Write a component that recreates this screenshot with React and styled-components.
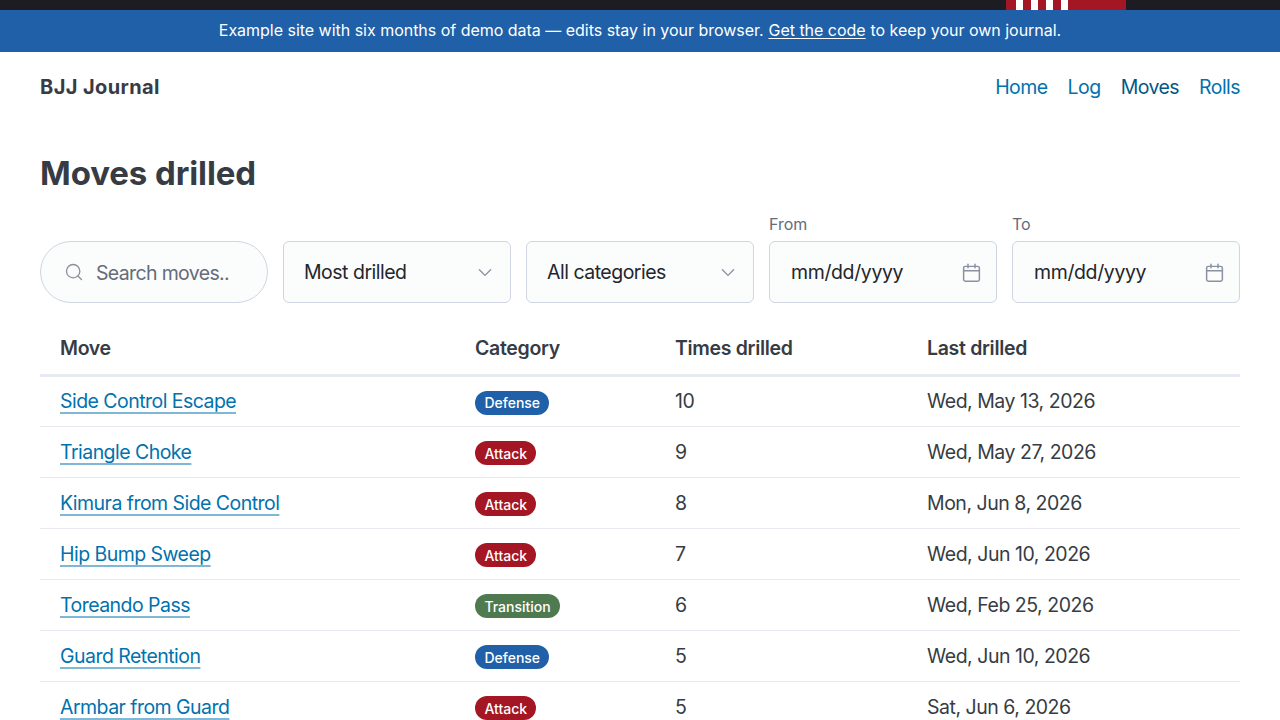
import React from "react";
import styled, { createGlobalStyle } from "styled-components";

const Global = createGlobalStyle`
  html, body { margin: 0; padding: 0; background: #fff; }
  body {
    font-family: Inter, "Noto Sans", sans-serif;
    font-size: 19.5px;
    letter-spacing: -0.48px;
    color: #373c44;
    -webkit-font-smoothing: antialiased;
  }
  * { box-sizing: border-box; }
`;

const Page = styled.div`
  width: 1280px;
  height: 720px;
  overflow: hidden;
`;

const TopStrip = styled.div`
  height: 10px;
  background: #1c1c22;
  display: flex;
  justify-content: flex-end;
  padding-right: 154px;
`;

const Flag = styled.div`
  width: 120px;
  height: 10px;
  background: #a51624;
  display: flex;
  padding-left: 10px;
  gap: 8px;
`;

const FlagStripe = styled.span`
  width: 7px;
  height: 10px;
  background: #fff;
`;

const Banner = styled.div`
  height: 42px;
  padding-bottom: 2px;
  background: #1f60a8;
  color: #fff;
  font-size: 16px;
  letter-spacing: -0.02px;
  display: flex;
  align-items: center;
  justify-content: center;
  gap: 0.3em;
`;

const BannerLink = styled.a`
  color: #fff;
  text-decoration: underline;
  text-underline-offset: 2px;
`;

const Main = styled.div`
  padding: 0 40px;
`;

const Nav = styled.nav`
  height: 70px;
  display: flex;
  align-items: center;
  justify-content: space-between;
`;

const Brand = styled.div`
  font-size: 20px;
  font-weight: 700;
  letter-spacing: 0.4px;
`;

const NavLinks = styled.div`
  display: flex;
  gap: 20px;
`;

const NavLink = styled.a`
  color: ${(p) => (p.$active ? "#015887" : "#0172ad")};
  letter-spacing: -0.55px;
`;

const Title = styled.h1`
  margin: 30px 0 0;
  font-size: 33px;
  line-height: 42px;
  font-weight: 700;
  letter-spacing: -0.1px;
`;

const Filters = styled.div`
  margin-top: 20px;
  display: grid;
  grid-template-columns: repeat(5, 228px);
  gap: 15px;
  align-items: end;
`;

const Field = styled.div`
  display: flex;
  flex-direction: column;
`;

const FieldLabel = styled.div`
  font-size: 16px;
  letter-spacing: 0;
  line-height: 20px;
  color: #646b79;
  margin-bottom: 7px;
`;

const Control = styled.div`
  height: 62px;
  background: #fbfcfc;
  border: 1px solid #cfd5e2;
  border-radius: ${(p) => (p.$pill ? "31px" : "6px")};
  display: flex;
  align-items: center;
  justify-content: space-between;
  padding: ${(p) => (p.$pill ? "0 0 0 22.5px" : p.$date ? "0 14.5px 0 21px" : "0 16px 0 20px")};
  color: #23262c;
  letter-spacing: ${(p) => (p.$date ? "-0.38px" : "-0.5px")};
  white-space: nowrap;
`;

const Placeholder = styled.span`
  color: #646b79;
  margin-left: 12.5px;
  padding-top: 2px;
  flex: 1;
  letter-spacing: -0.65px;
`;

const Table = styled.table`
  margin-top: 20px;
  width: 1200px;
  border-collapse: collapse;
  table-layout: fixed;
`;

const Th = styled.th`
  height: 52px;
  padding: 0 20px;
  text-align: left;
  font-weight: 600;
  letter-spacing: -0.32px;
  border-bottom: 3px solid #e7eaf0;
`;

const Td = styled.td`
  height: 51px;
  padding: 0 20px;
  border-bottom: 1px solid #e7eaf0;
`;

const BadgeCell = styled(Td)`
  padding-top: 2px;
`;

const MoveLink = styled.a`
  color: #0172ad;
  letter-spacing: -0.54px;
  text-decoration: underline;
  text-decoration-color: #7fb8d6;
  text-decoration-thickness: 1.5px;
  text-decoration-skip-ink: none;
  text-underline-offset: 4px;
`;

const badgeColors = { Defense: "#1f60a8", Attack: "#a51624", Transition: "#4f7a50" };

const Badge = styled.span`
  display: inline-flex;
  align-items: center;
  height: 24px;
  padding: 0 9.4px;
  border-radius: 12px;
  font-size: 14px;
  letter-spacing: 0;
  font-weight: 500;
  color: #fff;
  background: ${(p) => badgeColors[p.$kind]};
  vertical-align: middle;
`;

const SearchIcon = () => (
  <svg width="20" height="20" viewBox="0 0 24 24" fill="none" stroke="#8a91a0" strokeWidth="1.6" strokeLinecap="round" strokeLinejoin="round">
    <circle cx="11" cy="11" r="8" />
    <path d="m21 21-4.3-4.3" />
  </svg>
);

const Chevron = () => (
  <svg width="18" height="18" viewBox="0 0 24 24" fill="none" stroke="#8a91a0" strokeWidth="1.8" strokeLinecap="round" strokeLinejoin="round">
    <path d="m4.500 9 7.500 7.500L19.500 9" />
  </svg>
);

const CalendarIcon = () => (
  <svg width="21" height="21" viewBox="0 0 24 24" fill="none" stroke="#8a91a0" strokeWidth="1.7" strokeLinecap="round" strokeLinejoin="round">
    <rect x="3" y="5" width="18" height="17" rx="2" />
    <path d="M8 2.5v4M16 2.5v4M3 10h18" />
  </svg>
);

const rows = [
  ["Side Control Escape", "Defense", "10", "Wed, May 13, 2026"],
  ["Triangle Choke", "Attack", "9", "Wed, May 27, 2026"],
  ["Kimura from Side Control", "Attack", "8", "Mon, Jun 8, 2026"],
  ["Hip Bump Sweep", "Attack", "7", "Wed, Jun 10, 2026"],
  ["Toreando Pass", "Transition", "6", "Wed, Feb 25, 2026"],
  ["Guard Retention", "Defense", "5", "Wed, Jun 10, 2026"],
  ["Armbar from Guard", "Attack", "5", "Sat, Jun 6, 2026"],
];

export default function App() {
  return (
    <Page>
      <Global />
      <TopStrip>
        <Flag>
          <FlagStripe />
          <FlagStripe />
          <FlagStripe />
          <FlagStripe />
        </Flag>
      </TopStrip>
      <Banner>
        Example site with six months of demo data — edits stay in your browser.
        <BannerLink>Get the code</BannerLink>
        to keep your own journal.
      </Banner>
      <Main>
        <Nav>
          <Brand>BJJ Journal</Brand>
          <NavLinks>
            <NavLink>Home</NavLink>
            <NavLink>Log</NavLink>
            <NavLink $active>Moves</NavLink>
            <NavLink>Rolls</NavLink>
          </NavLinks>
        </Nav>
        <Title>Moves drilled</Title>
        <Filters>
          <Control $pill>
            <SearchIcon />
            <Placeholder>Search moves..</Placeholder>
          </Control>
          <Control>
            Most drilled
            <Chevron />
          </Control>
          <Control>
            All categories
            <Chevron />
          </Control>
          <Field>
            <FieldLabel>From</FieldLabel>
            <Control $date>
              mm/dd/yyyy
              <CalendarIcon />
            </Control>
          </Field>
          <Field>
            <FieldLabel>To</FieldLabel>
            <Control $date>
              mm/dd/yyyy
              <CalendarIcon />
            </Control>
          </Field>
        </Filters>
        <Table>
          <colgroup>
            <col width="415" />
            <col width="200" />
            <col width="252" />
            <col width="333" />
          </colgroup>
          <thead>
            <tr>
              <Th>Move</Th>
              <Th>Category</Th>
              <Th>Times drilled</Th>
              <Th>Last drilled</Th>
            </tr>
          </thead>
          <tbody>
            {rows.map((r) => (
              <tr key={r[0]}>
                <Td>
                  <MoveLink>{r[0]}</MoveLink>
                </Td>
                <BadgeCell>
                  <Badge $kind={r[1]}>{r[1]}</Badge>
                </BadgeCell>
                <Td>{r[2]}</Td>
                <Td>{r[3]}</Td>
              </tr>
            ))}
          </tbody>
        </Table>
      </Main>
    </Page>
  );
}
